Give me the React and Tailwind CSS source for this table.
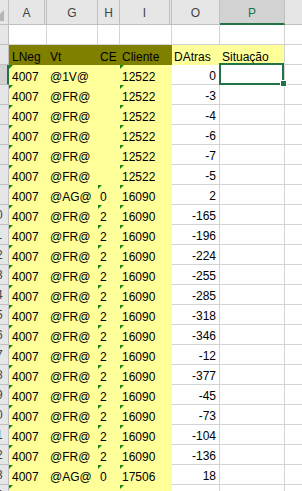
import React from "react";

const rows = [
  ["4007", "@1V@", "", "12522", "0"],
  ["4007", "@FR@", "", "12522", "-3"],
  ["4007", "@FR@", "", "12522", "-4"],
  ["4007", "@FR@", "", "12522", "-6"],
  ["4007", "@FR@", "", "12522", "-7"],
  ["4007", "@FR@", "", "12522", "-5"],
  ["4007", "@AG@", "0", "16090", "2"],
  ["4007", "@FR@", "2", "16090", "-165"],
  ["4007", "@FR@", "2", "16090", "-196"],
  ["4007", "@FR@", "2", "16090", "-224"],
  ["4007", "@FR@", "2", "16090", "-255"],
  ["4007", "@FR@", "2", "16090", "-285"],
  ["4007", "@FR@", "2", "16090", "-318"],
  ["4007", "@FR@", "2", "16090", "-346"],
  ["4007", "@FR@", "2", "16090", "-12"],
  ["4007", "@FR@", "2", "16090", "-377"],
  ["4007", "@FR@", "2", "16090", "-45"],
  ["4007", "@FR@", "2", "16090", "-73"],
  ["4007", "@FR@", "2", "16090", "-104"],
  ["4007", "@FR@", "2", "16090", "-136"],
  ["4007", "@AG@", "0", "17506", "18"],
];

function Tri() {
  return (
    <span className="absolute left-0 top-0 w-0 h-0 border-t-[4px] border-t-[#138a13] border-r-[4px] border-r-transparent" />
  );
}

function RowHeader({ n, sel }) {
  return (
    <div
      className={
        sel
          ? "w-[9px] h-full shrink-0 flex justify-end overflow-hidden bg-[#d2d2d2] border-b border-b-[#bfbfbf] border-r-2 border-r-[#217346]"
          : "w-[9px] h-full shrink-0 flex justify-end overflow-hidden bg-[#e6e6e6] border-b border-r border-[#bfbfbf]"
      }
    >
      <div className="w-[26px] shrink-0 text-center mr-[-1px] leading-[20px] text-[#444]">
        {n}
      </div>
    </div>
  );
}

function HeaderCell({ w, children, sel }) {
  return (
    <div
      className={
        (sel
          ? "bg-[#d2d2d2] border-r border-r-[#bfbfbf] border-b-2 border-b-[#217346] text-[#217346] "
          : "bg-[#e6e6e6] border-r border-b border-[#bfbfbf] text-[#444] ") +
        w +
        " shrink-0 h-full text-center leading-[20px] pt-[3px]"
      }
    >
      {children}
    </div>
  );
}

function DataRow({ r, n, sel, last }) {
  const [a, g, h, i, o] = r;
  return (
    <div className={last ? "flex h-[7px] overflow-hidden" : "flex h-[20px]"}>
      <RowHeader n={n} sel={sel} />
      <div className="w-[38px] shrink-0 h-[20px] bg-[#ffff99] relative pl-[3px] pt-[2px] leading-[20px]">
        <Tri />
        {a}
      </div>
      <div className="w-[51px] shrink-0 h-[20px] bg-[#ffff99] pl-[3px] pt-[2px] leading-[20px]">
        {g}
      </div>
      <div className="w-[22px] shrink-0 h-[20px] bg-[#ffff99] relative pl-[2px] pt-[2px] leading-[20px]">
        {h !== "" && <Tri />}
        {h}
      </div>
      <div className="w-[52px] shrink-0 h-[20px] bg-[#ffff99] relative pl-[2px] pt-[2px] leading-[20px]">
        <Tri />
        {i}
      </div>
      <div className="w-[48px] shrink-0 h-[20px] border-r border-b border-[#d4d4d4] text-right pr-[3px] pt-[2px] leading-[19px]">
        {o}
      </div>
      <div className="w-[65px] shrink-0 h-[20px] border-r border-b border-[#d4d4d4] relative">
        {sel && (
          <>
            <div className="absolute left-[-1px] top-[-2px] w-[65px] h-[22px] border-2 border-[#217346] z-10" />
            <div className="absolute left-[60px] top-[15px] w-[7px] h-[7px] bg-[#217346] border border-white z-20" />
          </>
        )}
      </div>
      <div className="flex-1 h-[20px] border-b border-[#d4d4d4]" />
    </div>
  );
}

export default function App() {
  return (
    <div className="w-[302px] h-[491px] overflow-hidden bg-white text-black text-[12px] font-['Liberation_Sans',Arial,sans-serif]">
      {/* column header */}
      <div className="flex h-[25px]">
        <div className="w-[9px] shrink-0 h-full bg-[#e6e6e6] border-r border-b border-[#bfbfbf] relative overflow-hidden">
          <svg className="absolute left-0 top-0" width="8" height="24" viewBox="0 0 8 24">
            <polygon points="4,10 4,21 -7,21" fill="#b5b5b5" />
          </svg>
        </div>
        <HeaderCell w="w-[36px]">A</HeaderCell>
        <HeaderCell w="w-[2px]"></HeaderCell>
        <HeaderCell w="w-[51px]">G</HeaderCell>
        <HeaderCell w="w-[22px]">H</HeaderCell>
        <HeaderCell w="w-[50px]">I</HeaderCell>
        <HeaderCell w="w-[2px]"></HeaderCell>
        <HeaderCell w="w-[48px]">O</HeaderCell>
        <HeaderCell w="w-[65px]" sel>
          P
        </HeaderCell>
        <div className="flex-1 h-full bg-[#e6e6e6] border-b border-[#bfbfbf]" />
      </div>

      {/* row 1 blank */}
      <div className="flex h-[20px]">
        <RowHeader n="1" />
        <div className="w-[38px] shrink-0 border-r border-b border-[#d4d4d4]" />
        <div className="w-[51px] shrink-0 border-r border-b border-[#d4d4d4]" />
        <div className="w-[22px] shrink-0 border-r border-b border-[#d4d4d4]" />
        <div className="w-[52px] shrink-0 border-r border-b border-[#d4d4d4]" />
        <div className="w-[48px] shrink-0 border-r border-b border-[#d4d4d4]" />
        <div className="w-[65px] shrink-0 border-r border-b border-[#d4d4d4]" />
        <div className="flex-1 border-b border-[#d4d4d4]" />
      </div>

      {/* row 2 headers */}
      <div className="flex h-[20px]">
        <RowHeader n="2" />
        <div className="w-[38px] shrink-0 bg-[#808000] pl-[3px] pt-[2px] leading-[20px]">LNeg</div>
        <div className="w-[51px] shrink-0 bg-[#808000] pl-[3px] pt-[2px] leading-[20px]">Vt</div>
        <div className="w-[22px] shrink-0 bg-[#808000] pl-[2px] pt-[2px] leading-[20px]">CE</div>
        <div className="w-[52px] shrink-0 bg-[#808000] pl-[2px] pt-[2px] leading-[20px]">Cliente</div>
        <div className="w-[48px] shrink-0 bg-[#ffff99] pl-[2px] pt-[2px] leading-[20px]">DAtras</div>
        <div className="w-[65px] shrink-0 bg-[#ffff99] border-r border-[#d4d4d4] pl-[2px] pt-[2px] leading-[20px]">
          Situação
        </div>
        <div className="flex-1 border-b border-[#d4d4d4]" />
      </div>

      {rows.map((r, idx) => (
        <DataRow key={idx} r={r} n={String(idx + 3)} sel={idx === 0} />
      ))}
      <DataRow r={["", "", "", "", ""]} n="24" last />
    </div>
  );
}
